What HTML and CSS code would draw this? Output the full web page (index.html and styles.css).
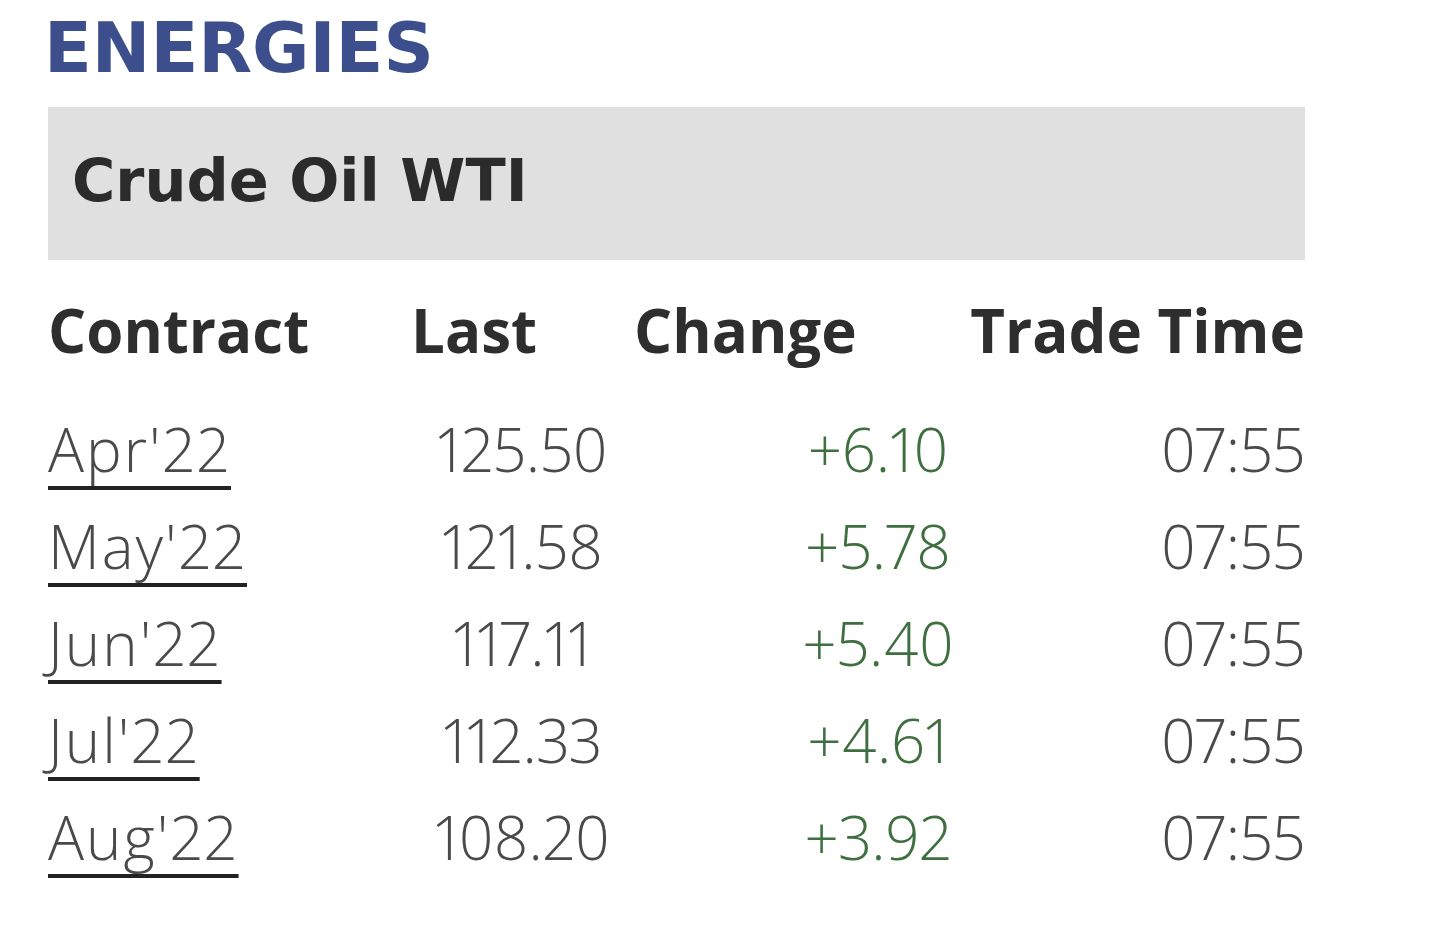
FILE: index.html
```html
<!DOCTYPE html>
<html lang="en">
<head>
<meta charset="utf-8">
<title>Energies</title>
<link rel="stylesheet" href="styles.css">
</head>
<body>
<main class="widget">
  <h1 class="title">ENERGIES</h1>
  <div class="product">Crude Oil WTI</div>
  <div class="quotes">
    <div class="hd c-contract">Contract</div>
    <div class="hd c-last">Last</div>
    <div class="hd c-chg">Change</div>
    <div class="hd c-time">Trade Time</div>

    <div class="cell c-contract"><a href="#">Apr'22</a></div>
    <div class="cell c-last">125.50</div>
    <div class="cell c-chg up">+6.10</div>
    <div class="cell c-time">07:55</div>

    <div class="cell c-contract"><a href="#">May'22</a></div>
    <div class="cell c-last">121.58</div>
    <div class="cell c-chg up">+5.78</div>
    <div class="cell c-time">07:55</div>

    <div class="cell c-contract"><a href="#">Jun'22</a></div>
    <div class="cell c-last">117.11</div>
    <div class="cell c-chg up">+5.40</div>
    <div class="cell c-time">07:55</div>

    <div class="cell c-contract"><a href="#">Jul'22</a></div>
    <div class="cell c-last">112.33</div>
    <div class="cell c-chg up">+4.61</div>
    <div class="cell c-time">07:55</div>

    <div class="cell c-contract"><a href="#">Aug'22</a></div>
    <div class="cell c-last">108.20</div>
    <div class="cell c-chg up">+3.92</div>
    <div class="cell c-time">07:55</div>
  </div>
</main>
</body>
</html>
```

FILE: styles.css
```css
html, body {
  margin: 0;
  padding: 0;
  background: #ffffff;
}

.widget {
  width: 1257px;
  padding: 13px 0 0 48px;
}

.title {
  margin: 0 0 24px -4px;
  font-family: "DejaVu Sans", sans-serif;
  font-weight: 700;
  font-size: 70px;
  line-height: 70px;
  color: #3c4f8c;
}

.product {
  height: 60px;
  padding: 44px 0 49px 24px;
  background: #e0e0e0;
  font-family: "DejaVu Sans", sans-serif;
  font-weight: 700;
  font-size: 59px;
  line-height: 60px;
  color: #2b2b2b;
}

.quotes {
  display: grid;
  grid-template-columns: 363px 223px 334px 1fr;
  grid-template-rows: 101px repeat(5, 97px);
  margin-top: 40px;
  font-family: "Open Sans", sans-serif;
  font-size: 60px;
}

.hd {
  height: 60px;
  font-weight: 700;
  line-height: 60px;
  color: #2e2e2e;
}

.cell {
  font-weight: 300;
  line-height: 97px;
  color: #4a4a4a;
  white-space: nowrap;
  font-variant-numeric: proportional-nums;
}

.c-last.cell {
  text-align: center;
}

.c-chg.cell {
  text-align: center;
  padding-left: 154px;
}

.c-time {
  text-align: right;
}

.up {
  color: #3f6e3f;
}

.c-contract a {
  color: #4a4a4a;
  letter-spacing: 2px;
  text-decoration: underline;
  text-decoration-color: #222222;
  text-decoration-thickness: 4px;
  text-underline-offset: 14px;
  text-decoration-skip-ink: none;
}
```
